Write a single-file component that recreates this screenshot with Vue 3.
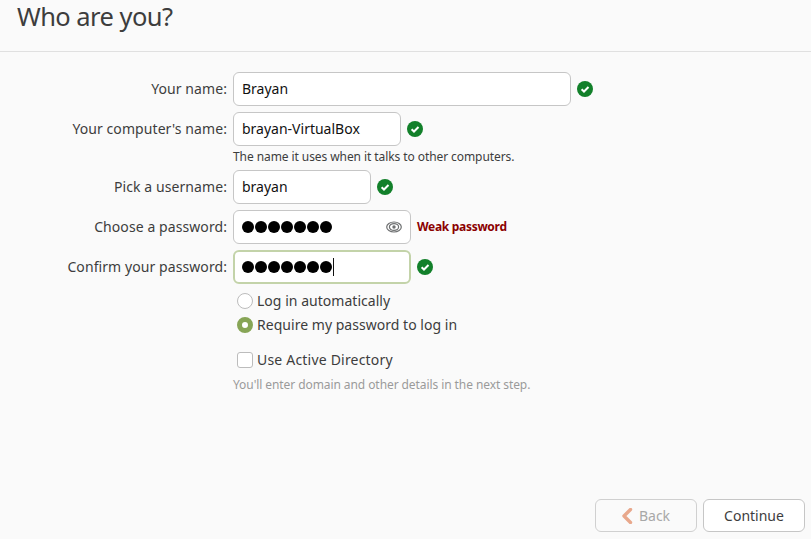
<script setup>
const dots = 7
const rows = [
  { label: 'Your name:', value: 'Brayan', cls: 'w-name', ok: true },
  { label: "Your computer's name:", value: 'brayan-VirtualBox', cls: 'w-comp', ok: true, hint: 'The name it uses when it talks to other computers.' },
  { label: 'Pick a username:', value: 'brayan', cls: 'w-user', ok: true },
]
</script>

<template>
  <div class="page">
    <header class="head"><h1>Who are you?</h1></header>
    <main class="form">
      <template v-for="r in rows" :key="r.label">
        <div class="row">
          <label class="lab">{{ r.label }}</label>
          <div class="field" :class="r.cls">{{ r.value }}</div>
          <svg class="ok" viewBox="0 0 16 16"><circle cx="8" cy="8" r="8" fill="#12802a"/><path d="M4.6 8.2 7 10.500 11.500 6" fill="none" stroke="#fff" stroke-width="2"/></svg>
        </div>
        <p v-if="r.hint" class="hint">{{ r.hint }}</p>
      </template>
      <div class="row">
        <label class="lab">Choose a password:</label>
        <div class="field w-pass">
          <span v-for="n in dots" :key="n" class="dot"></span>
          <svg class="eye" viewBox="0 0 16 16" fill="none" stroke="#6f7172" stroke-width="1.200">
            <ellipse cx="8" cy="8" rx="7.300" ry="5"/>
            <ellipse cx="8" cy="8" rx="4.600" ry="3.400"/>
            <circle cx="8" cy="8" r="1.700" fill="#6f7172" stroke="none"/>
          </svg>
        </div>
        <span class="weak">Weak password</span>
      </div>
      <div class="row">
        <label class="lab">Confirm your password:</label>
        <div class="field w-pass focus">
          <span v-for="n in dots" :key="n" class="dot"></span>
          <span class="caret"></span>
        </div>
        <svg class="ok" viewBox="0 0 16 16"><circle cx="8" cy="8" r="8" fill="#12802a"/><path d="M4.6 8.2 7 10.500 11.500 6" fill="none" stroke="#fff" stroke-width="2"/></svg>
      </div>
      <div class="opts">
        <div class="opt o1"><span class="radio"></span><span class="t">Log in automatically</span></div>
        <div class="opt o2"><span class="radio on"></span><span class="t">Require my password to log in</span></div>
        <div class="opt o3"><span class="check"></span><span class="t wide">Use Active Directory</span></div>
        <p class="note">You'll enter domain and other details in the next step.</p>
      </div>
    </main>
    <footer class="foot">
      <button class="btn dis">
        <svg class="chev" viewBox="0 0 12 16"><path d="M8.500 1.500 2 8 8.500 14.500" fill="none" stroke="#e8a88c" stroke-width="3.400" stroke-linecap="round" stroke-linejoin="round"/></svg>
        Back
      </button>
      <button class="btn">Continue</button>
    </footer>
  </div>
</template>

<style>
body { margin: 0; background: #fafafa; }
</style>

<style scoped>
.page {
  width: 811px; height: 539px; box-sizing: border-box; overflow: hidden;
  display: flex; flex-direction: column; background: #fafafa; color: #3d3d3d;
  font-family: "Noto Sans", sans-serif; font-size: 14px;
}
.head { height: 51px; border-bottom: 1px solid #e0e0e0; padding-left: 17px; flex: none; }
h1 { margin: 0; font-weight: 400; font-size: 25.500px; line-height: 36px; letter-spacing: -0.55px; color: #3d3d3d; margin-top: -2px; }
.form { padding-top: 20px; flex: 1; }
.row { display: flex; align-items: center; height: 34px; margin-bottom: 6px; }
.lab { width: 227px; text-align: right; margin-right: 6px; flex: none; padding-bottom: 2px; letter-spacing: 0.08px; }
.field {
  height: 34px; box-sizing: border-box; border: 1px solid #c6c6c6; border-radius: 6px;
  background: #fff; color: #111; padding: 0 0 2px 8px; display: flex; align-items: center; position: relative;
}
.w-name { width: 338px; }
.w-comp { width: 168px; }
.w-user { width: 138px; }
.w-pass { width: 178px; gap: 1px; padding-bottom: 0; }
.focus { border: 2px solid #c3d3a9; padding-left: 7px; }
.ok { width: 16px; height: 16px; margin-left: 6px; }
.hint { margin: -4px 0 4px 233px; height: 18px; font-size: 12px; line-height: 18px; letter-spacing: -0.08px; }
.dot { width: 12px; height: 12px; border-radius: 50%; background: #000; flex: none; }
.caret { width: 1px; height: 18px; background: #111; }
.eye { position: absolute; right: 8px; top: 8px; width: 16px; height: 16px; }
.weak { margin-left: 6px; font-size: 12px; font-weight: 700; color: #8b0000; padding-bottom: 2px; letter-spacing: -0.3px; }
.opts { margin-left: 237px; margin-top: -1px; }
.opt { display: flex; align-items: center; gap: 4px; height: 24px; letter-spacing: 0.03px; }
.t { padding-bottom: 2px; }
.wide { letter-spacing: 0.2px; }
.o3 { margin-top: 11px; }
.radio { width: 16px; height: 16px; box-sizing: border-box; border: 1px solid #bcbcbc; border-radius: 50%; background: #fff; flex: none; }
.radio.on { border: 5px solid #87a556; }
.check { width: 16px; height: 16px; box-sizing: border-box; border: 1px solid #bcbcbc; border-radius: 3px; background: #fff; flex: none; }
.note { margin: 4px 0 0 -4px; font-size: 12px; line-height: 18px; color: #9a9a9a; letter-spacing: -0.08px; }
.foot { display: flex; justify-content: flex-end; gap: 6px; padding: 0 6px 7px 0; }
.btn {
  width: 102px; height: 33px; box-sizing: border-box; border: 1px solid #c6c6c6; border-radius: 6px;
  background: #fff; color: #3d3d3d; font: inherit; padding: 0;
  display: flex; align-items: center; justify-content: center; gap: 5px;
}
.dis { background: #fafafa; color: #a8a8a8; border-color: #d0d0d0; }
.chev { width: 12px; height: 16px; }
</style>
